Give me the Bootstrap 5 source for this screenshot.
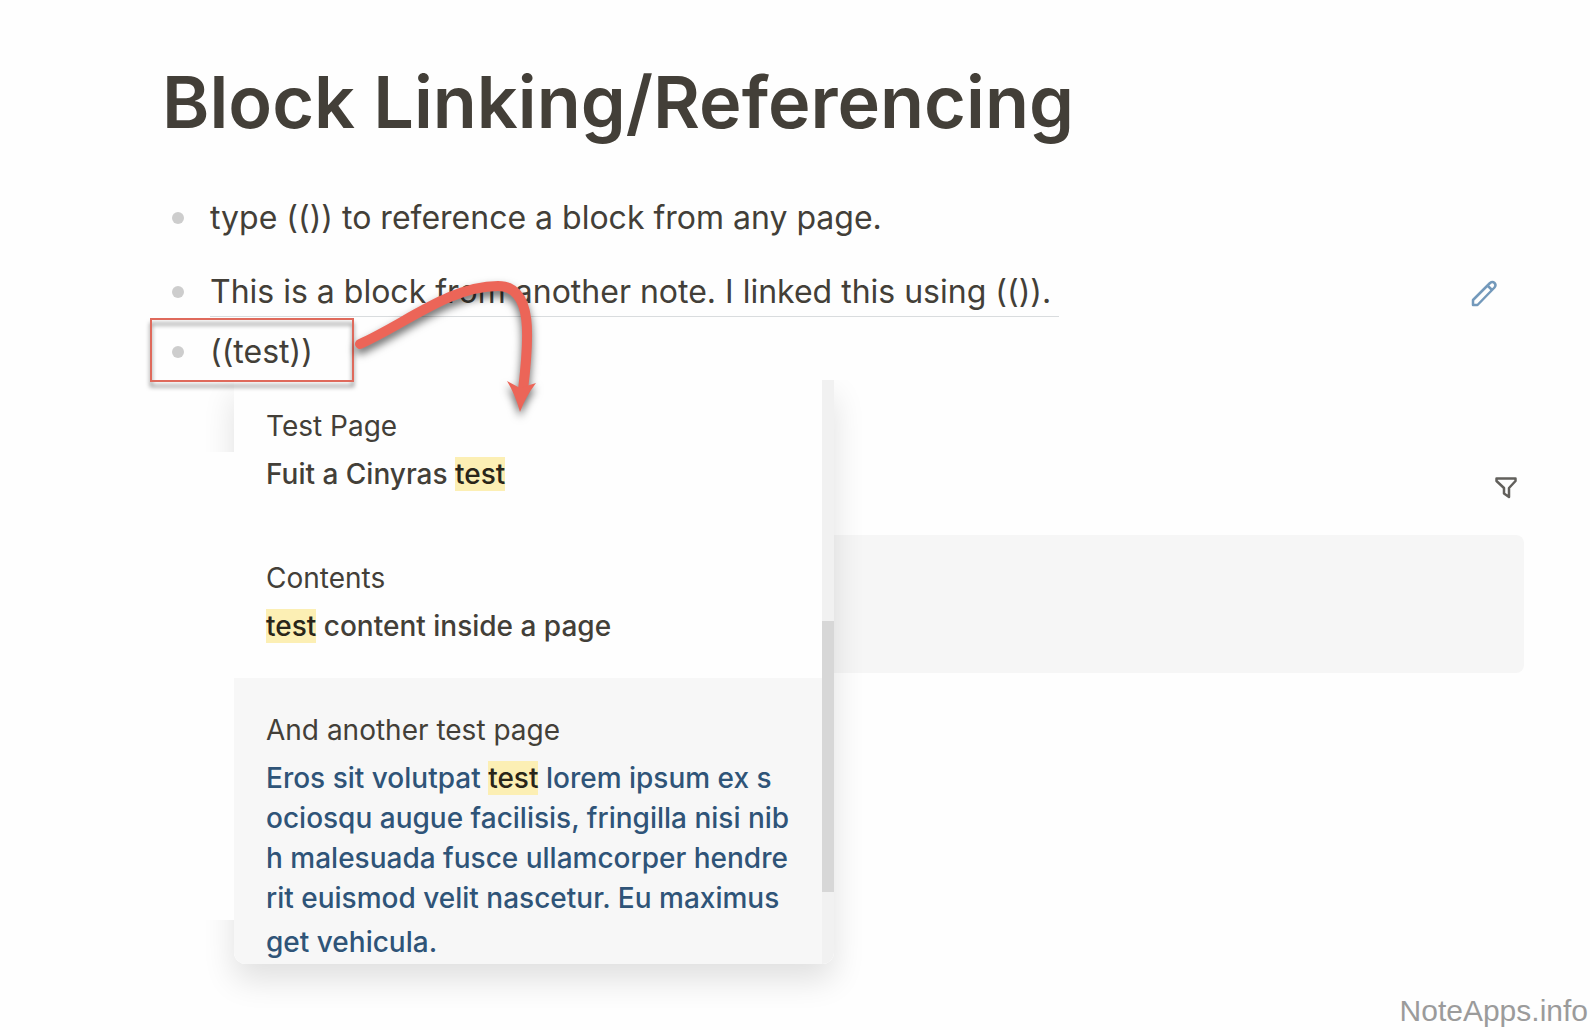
<!DOCTYPE html>
<html lang="en">
<head>
<meta charset="utf-8">
<meta name="viewport" content="width=device-width, initial-scale=1">
<title>Block Linking/Referencing</title>
<link rel="stylesheet" href="https://cdn.jsdelivr.net/npm/bootstrap@5.3.0/dist/css/bootstrap.min.css">
<style>
  body { font-family: Inter, "Liberation Sans", sans-serif; color: #433f38; background: #fefefe; }
  .note-main { padding: 58px 66px 0 160px; }
  .note-title { font-size: 72px; line-height: 88px; font-weight: 600; margin-bottom: 48px; padding-left: 2px; }
  .block-list { font-size: 32px; line-height: 48px; }
  .block-item { padding-left: 12px; gap: 26px; }
  .block-item::before { content: ""; flex: none; width: 12px; height: 12px; margin-top: 18px; border-radius: 50%; background: #cdcdcd; }
  .block-first { margin-bottom: 26px; }
  .block-ref { border-bottom: 1px solid #d9dcde; padding-right: 8px; margin-bottom: 11px; }
  .edit-btn { margin: 8px 24px 0 auto; }
  .marker-box { left: -10px; top: -10px; width: 204px; height: 64px; border: 2px solid #df6a5c; filter: drop-shadow(0 5px 2px rgba(0,0,0,.5)); pointer-events: none; z-index: 4; }
  .marker-arrow { left: 180px; top: -68px; z-index: 5; pointer-events: none; filter: drop-shadow(0 5px 4px rgba(0,0,0,.6)); }
  .popup-wrap { left: 74px; top: 52px; width: 600px; height: 584px; z-index: 3; }
  .popup-shade { inset: 0; border-radius: 0 0 12px 12px; box-shadow: 0 16px 32px rgba(0,0,0,.12); clip-path: inset(0 -60px -70px -60px); }
  .popup-mask { left: -40px; top: 72px; width: 40px; height: 468px; background: #fefefe; }
  .popup-list { background: #fefefe; border-radius: 0 0 12px 12px; overflow: hidden; }
  .popup-items { margin-top: -6px; }
  .result-item { display: flex; flex-direction: column; justify-content: flex-start; width: 100%; border: 0; background: transparent; color: inherit; text-align: left; padding: 32px 32px 0; height: 152px; font-size: 28px; line-height: 40px; white-space: nowrap; }
  .result-item strong { display: block; margin-top: 8px; font-weight: 500; }
  .result-item.chosen { background: #f7f7f7; height: 292px; }
  .chosen strong { color: #2f5478; }
  .chosen .last-line { display: block; margin-top: 4px; }
  .hit { background: #fcefb4; color: #292519; }
  .scroll-track { width: 12px; background: #f1f1f1; padding-top: 241px; }
  .scroll-thumb { height: 271px; background: #d7d7d7; }
  .refs-head { margin-top: 98px; padding-right: 5px; }
  .refs-panel { margin: 35px 0 0 80px; height: 138px; background: #f6f6f6; border-radius: 8px; }
  .site-mark { font: 30px/38px "Liberation Sans", sans-serif; color: #9b9b9b; padding-right: 2px; }
</style>
<script src="https://cdn.jsdelivr.net/npm/bootstrap@5.3.0/dist/js/bootstrap.bundle.min.js"></script>
</head>
<body class="d-flex flex-column min-vh-100 overflow-hidden">
<main class="note-main">
  <h1 class="note-title">Block Linking/Referencing</h1>
  <ul class="block-list list-unstyled mb-0">
    <li class="block-item block-first d-flex align-items-start">type (()) to reference a block from any page.</li>
    <li class="block-item d-flex align-items-start">
      <span class="block-ref">This is a block from another note. I linked this using (()).</span>
      <button type="button" class="edit-btn btn p-0 border-0 d-flex" aria-label="Edit block">
        <svg width="34" height="34" viewBox="0 0 34 34" fill="none" stroke="#7399bb" stroke-width="2.500" stroke-linejoin="round"><path d="M7 29v-5L24 7q2.500-2 4.500 0t0 4.500L11.500 29zM21.500 9.500l4.500 4.500"/></svg>
      </button>
    </li>
    <li class="block-item d-flex align-items-start position-relative">
      <span>((test))</span>
      <span class="marker-box position-absolute"></span>
      <svg class="marker-arrow position-absolute" width="210" height="170" viewBox="340 260 210 170" fill="none">
        <path d="M360 344C405 324 450 286 498 286C534 286 529 340 523 390" stroke="#ec6558" stroke-width="10" stroke-linecap="round"/>
        <path d="M507 381L520 388L536 383Q526 396 520 412Q515 394 507 381Z" fill="#ec6558"/>
      </svg>
      <div class="popup-wrap position-absolute">
        <div class="popup-shade position-absolute"></div>
        <div class="popup-mask position-absolute"></div>
        <div class="popup-list position-relative d-flex h-100">
          <div class="popup-items flex-grow-1">
            <button type="button" class="result-item">Test Page<strong>Fuit a Cinyras <span class="hit">test</span></strong></button>
            <button type="button" class="result-item">Contents<strong><span class="hit">test</span> content inside a page</strong></button>
            <button type="button" class="result-item chosen">And another test page<strong>Eros sit volutpat <span class="hit">test</span> lorem ipsum ex s<br>ociosqu augue facilisis, fringilla nisi nib<br>h malesuada fusce ullamcorper hendre<br>rit euismod velit nascetur. Eu maximus<span class="last-line">get vehicula.</span></strong></button>
          </div>
          <div class="scroll-track"><div class="scroll-thumb"></div></div>
        </div>
      </div>
    </li>
  </ul>
  <section>
    <div class="refs-head d-flex justify-content-end">
      <button type="button" class="btn p-0 border-0 d-flex" aria-label="Filter references">
        <svg width="26" height="26" viewBox="0 0 26 26" fill="none" stroke="#62605c" stroke-width="2.500" stroke-linejoin="round"><path d="M3.500 4.500h19v2.500L16 14v9l-5-3.500V14L3.500 7z"/></svg>
      </button>
    </div>
    <div class="refs-panel"></div>
  </section>
</main>
<footer class="site-mark mt-auto text-end">NoteApps.info</footer>
</body>
</html>
